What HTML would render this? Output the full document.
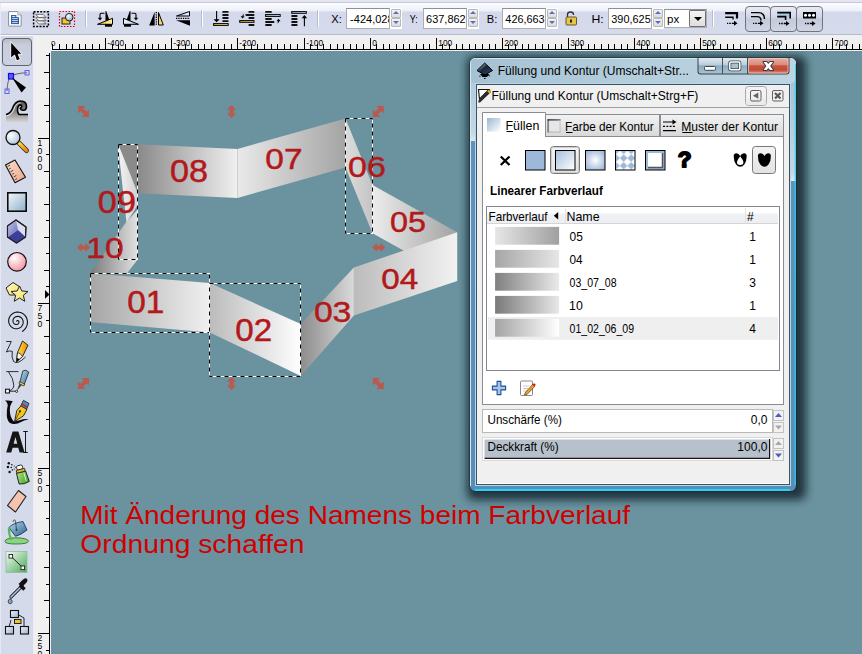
<!DOCTYPE html><html><head><meta charset="utf-8"><style>*{margin:0;padding:0;box-sizing:border-box}
html,body{width:862px;height:654px;overflow:hidden;background:#6a939f;font-family:"Liberation Sans",sans-serif;font-size:12px;color:#000}
.a{position:absolute}
#topstrip{left:0;top:0;width:862px;height:3px;background:#e3e6f1;border-bottom:1px solid #c3c9da}
#tb{left:0;top:3px;width:862px;height:32px;background:linear-gradient(#fcfdfe 0,#eceff8 8px,#d3d8eb 9px,#d6dbec 30px);border-bottom:1px solid #b5bccf;border-left:1px solid #e8ebf5}
#lt{left:0;top:35px;width:34px;height:619px;background:#d5daeb;border-top:1px solid #fbfcfe;border-left:1px solid #e6e9f4;border-right:1px solid #e9ecf5}
#rulh{left:34px;top:35px;width:829px;height:16px;background:#f0f0f0}
#rulv{left:34px;top:35px;width:17px;height:619px;background:#f0f0f0}
#dlg{left:470px;top:58px;width:326px;height:434px;border:1px solid #2f4a5a;border-radius:6px;background:linear-gradient(#c0d4e2,#a8c4d8 40px,#8fb3cc)}
#dlgin{left:6px;top:25px;width:313px;height:401px;background:#ededed;border:1px solid #557a94}
.inp{position:absolute;background:#fff;border:1px solid #abadb3;border-top-color:#8c8f96;height:21px;overflow:hidden;font-size:12px;letter-spacing:-0.6px;line-height:19px;padding-left:4px;white-space:nowrap}
.spin{position:absolute;width:12px;height:21px;background:#fff}
.spin i{position:absolute;left:1px;width:10px;height:9px;background:linear-gradient(#f2f2f2,#dcdcdc);border:1px solid #b9b9b9;border-radius:1px}
.spin i.u{top:1px}.spin i.d{top:10px;height:9px}
.spin i:after{content:"";position:absolute;left:0.5px;border-left:3.5px solid transparent;border-right:3.5px solid transparent}
.spin i.u:after{top:1px;border-bottom:3px solid #5a6cc8}
.spin i.d:after{top:2px;border-top:3px solid #5a6cc8}
.lbl{position:absolute;font-size:12px;line-height:14px;white-space:nowrap}
.sep{position:absolute;width:2px;height:17px;border-left:1px solid #b7bdcc;border-right:1px solid #fff}
.tbtn{position:absolute;border:1px solid #6f7480;border-radius:4px;background:linear-gradient(#e9ecf3,#cfd5e3 45%,#c3cadb 50%,#cfd5e3)}
</style></head><body>
<svg class="a" style="left:0;top:0" width="862" height="654" viewBox="0 0 862 654">
<defs>
<linearGradient id="g08" x1="0" y1="0" x2="1" y2="0"><stop offset="0" stop-color="#8a8a8a"/><stop offset="1" stop-color="#f0f0f0"/></linearGradient>
<linearGradient id="g07" x1="0" y1="0" x2="1" y2="0"><stop offset="0" stop-color="#e9e9e9"/><stop offset="1" stop-color="#a4a4a4"/></linearGradient>
<linearGradient id="g06" x1="0" y1="0" x2="1" y2="0"><stop offset="0" stop-color="#dcdcdc"/><stop offset="1" stop-color="#c4c4c4"/></linearGradient>
<linearGradient id="g05" x1="0" y1="0" x2="1" y2="0"><stop offset="0" stop-color="#ececec"/><stop offset="1" stop-color="#a3a3a3"/></linearGradient>
<linearGradient id="g04" x1="0" y1="0" x2="1" y2="0"><stop offset="0" stop-color="#bcbcbc"/><stop offset="1" stop-color="#f2f2f2"/></linearGradient>
<linearGradient id="g03" x1="0" y1="0" x2="1" y2="0"><stop offset="0" stop-color="#8c8c8c"/><stop offset="1" stop-color="#dadada"/></linearGradient>
<linearGradient id="g02" x1="0" y1="0" x2="1" y2="0"><stop offset="0" stop-color="#bbbbbb"/><stop offset="1" stop-color="#ffffff"/></linearGradient>
<linearGradient id="g01" x1="0" y1="0" x2="1" y2="0"><stop offset="0" stop-color="#a6a6a6"/><stop offset="1" stop-color="#f0f0f0"/></linearGradient>
<linearGradient id="g10" x1="0" y1="0" x2="1" y2="0"><stop offset="0" stop-color="#7a7a7a"/><stop offset="1" stop-color="#e2e2e2"/></linearGradient>
<linearGradient id="g09" x1="0" y1="0" x2="1" y2="0"><stop offset="0" stop-color="#f4f4f4"/><stop offset="1" stop-color="#d0d0d0"/></linearGradient>
<filter id="blur" x="-20%" y="-20%" width="140%" height="140%"><feGaussianBlur stdDeviation="4.5"/></filter>
</defs>
<polygon points="137.8,144.2 237.5,149 237.5,198 137.8,193.2" fill="url(#g08)" />
<polygon points="237.5,149 345.5,118.4 345.5,167.5 237.5,198" fill="url(#g07)" />
<line x1="237.5" y1="149" x2="237.5" y2="198" stroke="#c8d0d2" stroke-width="0.8"/>
<polygon points="345.5,118.4 372.5,185.1 372.5,233.3 345.5,167.5" fill="url(#g06)" />
<polygon points="372.5,185.1 457.2,232.2 457.2,280.4 372.5,233.3" fill="url(#g05)" />
<polygon points="353.9,267.6 457.2,232.2 457.2,281 353.9,315.4" fill="url(#g04)" />
<polygon points="300.8,324.1 353.9,267.6 353.9,315.4 300.8,375.9" fill="url(#g03)" />
<polygon points="209.8,282.9 300.8,324.1 300.8,375.9 209.8,332.4" fill="url(#g02)" />
<polygon points="90,273.2 209.8,282.9 209.8,332.4 90,321.9" fill="url(#g01)" />
<polygon points="90,273.2 127.1,273.2 137.8,259.2 137.8,209.5 125.9,222.5" fill="url(#g10)" />
<polygon points="118.3,144.2 137.8,144.2 137.8,193.2" fill="#8a8a8a" />
<polygon points="118.3,144.2 137.8,193.2 137.8,205 126.5,222.5 118.3,148" fill="url(#g09)" />
<rect x="118.5" y="144.5" width="19.0" height="115.0" fill="none" stroke="#fff" stroke-width="1"/>
<rect x="118.5" y="144.5" width="19.0" height="115.0" fill="none" stroke="#000" stroke-width="1" stroke-dasharray="4 4"/>
<rect x="345.5" y="118.5" width="27.0" height="115.0" fill="none" stroke="#fff" stroke-width="1"/>
<rect x="345.5" y="118.5" width="27.0" height="115.0" fill="none" stroke="#000" stroke-width="1" stroke-dasharray="4 4"/>
<rect x="90.5" y="273.5" width="119.0" height="59.0" fill="none" stroke="#fff" stroke-width="1"/>
<rect x="90.5" y="273.5" width="119.0" height="59.0" fill="none" stroke="#000" stroke-width="1" stroke-dasharray="4 4"/>
<rect x="209.5" y="283.5" width="91.0" height="93.0" fill="none" stroke="#fff" stroke-width="1"/>
<rect x="209.5" y="283.5" width="91.0" height="93.0" fill="none" stroke="#000" stroke-width="1" stroke-dasharray="4 4"/>
<text transform="translate(170.06,181.70) scale(1.1787,1.0617)" font-family="Liberation Sans" font-weight="normal" font-size="29" fill="#b3181b" stroke="#b3181b" stroke-width="0.45">08</text>
<text transform="translate(265.29,168.92) scale(1.1529,0.9984)" font-family="Liberation Sans" font-weight="normal" font-size="29" fill="#b3181b" stroke="#b3181b" stroke-width="0.45">07</text>
<text transform="translate(348.07,177.31) scale(1.1759,1.0130)" font-family="Liberation Sans" font-weight="normal" font-size="29" fill="#b3181b" stroke="#b3181b" stroke-width="0.45">06</text>
<text transform="translate(389.93,232.21) scale(1.1168,1.0179)" font-family="Liberation Sans" font-weight="normal" font-size="29" fill="#b3181b" stroke="#b3181b" stroke-width="0.45">05</text>
<text transform="translate(381.20,289.11) scale(1.1462,1.0130)" font-family="Liberation Sans" font-weight="normal" font-size="29" fill="#b3181b" stroke="#b3181b" stroke-width="0.45">04</text>
<text transform="translate(313.88,321.81) scale(1.1625,1.0179)" font-family="Liberation Sans" font-weight="normal" font-size="29" fill="#b3181b" stroke="#b3181b" stroke-width="0.45">03</text>
<text transform="translate(127.20,313.20) scale(1.1512,1.0569)" font-family="Liberation Sans" font-weight="normal" font-size="29" fill="#b3181b" stroke="#b3181b" stroke-width="0.45">01</text>
<text transform="translate(235.21,341.10) scale(1.1427,1.0617)" font-family="Liberation Sans" font-weight="normal" font-size="29" fill="#b3181b" stroke="#b3181b" stroke-width="0.45">02</text>
<text transform="translate(86.35,258.41) scale(1.1551,1.0179)" font-family="Liberation Sans" font-weight="normal" font-size="29" fill="#b3181b" stroke="#b3181b" stroke-width="0.45">10</text>
<text transform="translate(97.86,212.70) scale(1.1798,1.0617)" font-family="Liberation Sans" font-weight="normal" font-size="29" fill="#b3181b" stroke="#b3181b" stroke-width="0.45">09</text>
<path transform="translate(83.5,111.4)" d="M-5.5,-5.5 L2,-5.5 L-0.3,-3.2 L3.2,0.3 L5.5,-2 L5.5,5.5 L-2,5.5 L0.3,3.2 L-3.2,-0.3 L-5.5,2 Z" fill="#b95a4f"/>
<path transform="translate(378.3,111.4) scale(-1,1)" d="M-5.5,-5.5 L2,-5.5 L-0.3,-3.2 L3.2,0.3 L5.5,-2 L5.5,5.5 L-2,5.5 L0.3,3.2 L-3.2,-0.3 L-5.5,2 Z" fill="#b95a4f"/>
<path transform="translate(83.5,383.5) scale(-1,1)" d="M-5.5,-5.5 L2,-5.5 L-0.3,-3.2 L3.2,0.3 L5.5,-2 L5.5,5.5 L-2,5.5 L0.3,3.2 L-3.2,-0.3 L-5.5,2 Z" fill="#b95a4f"/>
<path transform="translate(378.3,383.5)" d="M-5.5,-5.5 L2,-5.5 L-0.3,-3.2 L3.2,0.3 L5.5,-2 L5.5,5.5 L-2,5.5 L0.3,3.2 L-3.2,-0.3 L-5.5,2 Z" fill="#b95a4f"/>
<path transform="translate(231.5,111.5)" d="M0,-6.5 L4.6,-1.8 L2,-1.8 L2,1.8 L4.6,1.8 L0,6.5 L-4.6,1.8 L-2,1.8 L-2,-1.8 L-4.6,-1.8 Z" fill="#b95a4f"/>
<path transform="translate(231.5,383.5)" d="M0,-6.5 L4.6,-1.8 L2,-1.8 L2,1.8 L4.6,1.8 L0,6.5 L-4.6,1.8 L-2,1.8 L-2,-1.8 L-4.6,-1.8 Z" fill="#b95a4f"/>
<path transform="translate(83.5,247.4) rotate(90)" d="M0,-6.5 L4.6,-1.8 L2,-1.8 L2,1.8 L4.6,1.8 L0,6.5 L-4.6,1.8 L-2,1.8 L-2,-1.8 L-4.6,-1.8 Z" fill="#b95a4f"/>
<path transform="translate(378.8,247.4) rotate(90)" d="M0,-6.5 L4.6,-1.8 L2,-1.8 L2,1.8 L4.6,1.8 L0,6.5 L-4.6,1.8 L-2,1.8 L-2,-1.8 L-4.6,-1.8 Z" fill="#b95a4f"/>
<text transform="translate(80.20,523.8) scale(1.0660,1)" font-family="Liberation Sans" font-weight="normal" font-size="26.3" fill="#d00000" >Mit Änderung des Namens beim Farbverlauf</text>
<text transform="translate(80.36,552.8) scale(1.0751,1)" font-family="Liberation Sans" font-weight="normal" font-size="26.3" fill="#d00000" >Ordnung schaffen</text>
<rect x="467" y="56" width="339" height="444" rx="7" fill="#0a1f28" opacity="0.8" filter="url(#blur)"/>
</svg>
<div id="rulh" class="a"></div><div id="rulv" class="a"></div><div id="lt" class="a"></div>
<svg class="a" style="left:0;top:0" width="862" height="654" viewBox="0 0 862 654" shape-rendering="crispEdges">
<rect x="52" y="49" width="810" height="1" fill="#000"/>
<rect x="49" y="53" width="1" height="601" fill="#000"/>
<rect x="52" y="44" width="1" height="5" fill="#000"/>
<rect x="59" y="44" width="1" height="5" fill="#000"/>
<rect x="66" y="44" width="1" height="5" fill="#000"/>
<rect x="72" y="44" width="1" height="5" fill="#000"/>
<rect x="79" y="44" width="1" height="5" fill="#000"/>
<rect x="85" y="44" width="1" height="5" fill="#000"/>
<rect x="92" y="44" width="1" height="5" fill="#000"/>
<rect x="99" y="44" width="1" height="5" fill="#000"/>
<rect x="105" y="38" width="1" height="11" fill="#000"/>
<rect x="112" y="44" width="1" height="5" fill="#000"/>
<rect x="118" y="44" width="1" height="5" fill="#000"/>
<rect x="125" y="44" width="1" height="5" fill="#000"/>
<rect x="132" y="44" width="1" height="5" fill="#000"/>
<rect x="138" y="44" width="1" height="5" fill="#000"/>
<rect x="145" y="44" width="1" height="5" fill="#000"/>
<rect x="152" y="44" width="1" height="5" fill="#000"/>
<rect x="158" y="44" width="1" height="5" fill="#000"/>
<rect x="165" y="44" width="1" height="5" fill="#000"/>
<rect x="171" y="38" width="1" height="11" fill="#000"/>
<rect x="178" y="44" width="1" height="5" fill="#000"/>
<rect x="185" y="44" width="1" height="5" fill="#000"/>
<rect x="191" y="44" width="1" height="5" fill="#000"/>
<rect x="198" y="44" width="1" height="5" fill="#000"/>
<rect x="204" y="44" width="1" height="5" fill="#000"/>
<rect x="211" y="44" width="1" height="5" fill="#000"/>
<rect x="218" y="44" width="1" height="5" fill="#000"/>
<rect x="224" y="44" width="1" height="5" fill="#000"/>
<rect x="231" y="44" width="1" height="5" fill="#000"/>
<rect x="237" y="38" width="1" height="11" fill="#000"/>
<rect x="244" y="44" width="1" height="5" fill="#000"/>
<rect x="251" y="44" width="1" height="5" fill="#000"/>
<rect x="257" y="44" width="1" height="5" fill="#000"/>
<rect x="264" y="44" width="1" height="5" fill="#000"/>
<rect x="271" y="44" width="1" height="5" fill="#000"/>
<rect x="277" y="44" width="1" height="5" fill="#000"/>
<rect x="284" y="44" width="1" height="5" fill="#000"/>
<rect x="290" y="44" width="1" height="5" fill="#000"/>
<rect x="297" y="44" width="1" height="5" fill="#000"/>
<rect x="304" y="38" width="1" height="11" fill="#000"/>
<rect x="310" y="44" width="1" height="5" fill="#000"/>
<rect x="317" y="44" width="1" height="5" fill="#000"/>
<rect x="323" y="44" width="1" height="5" fill="#000"/>
<rect x="330" y="44" width="1" height="5" fill="#000"/>
<rect x="337" y="44" width="1" height="5" fill="#000"/>
<rect x="343" y="44" width="1" height="5" fill="#000"/>
<rect x="350" y="44" width="1" height="5" fill="#000"/>
<rect x="356" y="44" width="1" height="5" fill="#000"/>
<rect x="363" y="44" width="1" height="5" fill="#000"/>
<rect x="370" y="38" width="1" height="11" fill="#000"/>
<rect x="376" y="44" width="1" height="5" fill="#000"/>
<rect x="383" y="44" width="1" height="5" fill="#000"/>
<rect x="389" y="44" width="1" height="5" fill="#000"/>
<rect x="396" y="44" width="1" height="5" fill="#000"/>
<rect x="403" y="44" width="1" height="5" fill="#000"/>
<rect x="409" y="44" width="1" height="5" fill="#000"/>
<rect x="416" y="44" width="1" height="5" fill="#000"/>
<rect x="423" y="44" width="1" height="5" fill="#000"/>
<rect x="429" y="44" width="1" height="5" fill="#000"/>
<rect x="436" y="38" width="1" height="11" fill="#000"/>
<rect x="442" y="44" width="1" height="5" fill="#000"/>
<rect x="449" y="44" width="1" height="5" fill="#000"/>
<rect x="456" y="44" width="1" height="5" fill="#000"/>
<rect x="462" y="44" width="1" height="5" fill="#000"/>
<rect x="469" y="44" width="1" height="5" fill="#000"/>
<rect x="475" y="44" width="1" height="5" fill="#000"/>
<rect x="482" y="44" width="1" height="5" fill="#000"/>
<rect x="489" y="44" width="1" height="5" fill="#000"/>
<rect x="495" y="44" width="1" height="5" fill="#000"/>
<rect x="502" y="38" width="1" height="11" fill="#000"/>
<rect x="508" y="44" width="1" height="5" fill="#000"/>
<rect x="515" y="44" width="1" height="5" fill="#000"/>
<rect x="522" y="44" width="1" height="5" fill="#000"/>
<rect x="528" y="44" width="1" height="5" fill="#000"/>
<rect x="535" y="44" width="1" height="5" fill="#000"/>
<rect x="542" y="44" width="1" height="5" fill="#000"/>
<rect x="548" y="44" width="1" height="5" fill="#000"/>
<rect x="555" y="44" width="1" height="5" fill="#000"/>
<rect x="561" y="44" width="1" height="5" fill="#000"/>
<rect x="568" y="38" width="1" height="11" fill="#000"/>
<rect x="575" y="44" width="1" height="5" fill="#000"/>
<rect x="581" y="44" width="1" height="5" fill="#000"/>
<rect x="588" y="44" width="1" height="5" fill="#000"/>
<rect x="594" y="44" width="1" height="5" fill="#000"/>
<rect x="601" y="44" width="1" height="5" fill="#000"/>
<rect x="608" y="44" width="1" height="5" fill="#000"/>
<rect x="614" y="44" width="1" height="5" fill="#000"/>
<rect x="621" y="44" width="1" height="5" fill="#000"/>
<rect x="627" y="44" width="1" height="5" fill="#000"/>
<rect x="634" y="38" width="1" height="11" fill="#000"/>
<rect x="641" y="44" width="1" height="5" fill="#000"/>
<rect x="647" y="44" width="1" height="5" fill="#000"/>
<rect x="654" y="44" width="1" height="5" fill="#000"/>
<rect x="660" y="44" width="1" height="5" fill="#000"/>
<rect x="667" y="44" width="1" height="5" fill="#000"/>
<rect x="674" y="44" width="1" height="5" fill="#000"/>
<rect x="680" y="44" width="1" height="5" fill="#000"/>
<rect x="687" y="44" width="1" height="5" fill="#000"/>
<rect x="694" y="44" width="1" height="5" fill="#000"/>
<rect x="700" y="38" width="1" height="11" fill="#000"/>
<rect x="707" y="44" width="1" height="5" fill="#000"/>
<rect x="713" y="44" width="1" height="5" fill="#000"/>
<rect x="720" y="44" width="1" height="5" fill="#000"/>
<rect x="727" y="44" width="1" height="5" fill="#000"/>
<rect x="733" y="44" width="1" height="5" fill="#000"/>
<rect x="740" y="44" width="1" height="5" fill="#000"/>
<rect x="746" y="44" width="1" height="5" fill="#000"/>
<rect x="753" y="44" width="1" height="5" fill="#000"/>
<rect x="760" y="44" width="1" height="5" fill="#000"/>
<rect x="766" y="38" width="1" height="11" fill="#000"/>
<rect x="773" y="44" width="1" height="5" fill="#000"/>
<rect x="779" y="44" width="1" height="5" fill="#000"/>
<rect x="786" y="44" width="1" height="5" fill="#000"/>
<rect x="793" y="44" width="1" height="5" fill="#000"/>
<rect x="799" y="44" width="1" height="5" fill="#000"/>
<rect x="806" y="44" width="1" height="5" fill="#000"/>
<rect x="813" y="44" width="1" height="5" fill="#000"/>
<rect x="819" y="44" width="1" height="5" fill="#000"/>
<rect x="826" y="44" width="1" height="5" fill="#000"/>
<rect x="832" y="38" width="1" height="11" fill="#000"/>
<rect x="839" y="44" width="1" height="5" fill="#000"/>
<rect x="846" y="44" width="1" height="5" fill="#000"/>
<rect x="852" y="44" width="1" height="5" fill="#000"/>
<rect x="859" y="44" width="1" height="5" fill="#000"/>
<text x="107.3" y="45.7" font-family="Liberation Sans" font-size="8.4" fill="#000" shape-rendering="auto">-400</text>
<text x="173.3" y="45.7" font-family="Liberation Sans" font-size="8.4" fill="#000" shape-rendering="auto">-300</text>
<text x="239.3" y="45.7" font-family="Liberation Sans" font-size="8.4" fill="#000" shape-rendering="auto">-200</text>
<text x="306.3" y="45.7" font-family="Liberation Sans" font-size="8.4" fill="#000" shape-rendering="auto">-100</text>
<text x="372.3" y="45.7" font-family="Liberation Sans" font-size="8.4" fill="#000" shape-rendering="auto">0</text>
<text x="438.3" y="45.7" font-family="Liberation Sans" font-size="8.4" fill="#000" shape-rendering="auto">100</text>
<text x="504.3" y="45.7" font-family="Liberation Sans" font-size="8.4" fill="#000" shape-rendering="auto">200</text>
<text x="570.3" y="45.7" font-family="Liberation Sans" font-size="8.4" fill="#000" shape-rendering="auto">300</text>
<text x="636.3" y="45.7" font-family="Liberation Sans" font-size="8.4" fill="#000" shape-rendering="auto">400</text>
<text x="702.3" y="45.7" font-family="Liberation Sans" font-size="8.4" fill="#000" shape-rendering="auto">500</text>
<text x="768.3" y="45.7" font-family="Liberation Sans" font-size="8.4" fill="#000" shape-rendering="auto">600</text>
<text x="834.3" y="45.7" font-family="Liberation Sans" font-size="8.4" fill="#000" shape-rendering="auto">700</text>
<text x="51" y="45.8" font-family="Liberation Sans" font-size="8" fill="#000">0</text>
<rect x="52" y="44" width="1" height="5" fill="#000"/>
<rect x="46" y="55" width="3" height="1" fill="#000"/>
<rect x="44" y="72" width="5" height="1" fill="#000"/>
<rect x="46" y="88" width="3" height="1" fill="#000"/>
<rect x="44" y="105" width="5" height="1" fill="#000"/>
<rect x="46" y="121" width="3" height="1" fill="#000"/>
<rect x="38" y="138" width="11" height="1" fill="#000"/>
<rect x="46" y="154" width="3" height="1" fill="#000"/>
<rect x="44" y="171" width="5" height="1" fill="#000"/>
<rect x="46" y="187" width="3" height="1" fill="#000"/>
<rect x="44" y="204" width="5" height="1" fill="#000"/>
<rect x="46" y="220" width="3" height="1" fill="#000"/>
<rect x="44" y="237" width="5" height="1" fill="#000"/>
<rect x="46" y="253" width="3" height="1" fill="#000"/>
<rect x="44" y="270" width="5" height="1" fill="#000"/>
<rect x="46" y="286" width="3" height="1" fill="#000"/>
<rect x="38" y="303" width="11" height="1" fill="#000"/>
<rect x="46" y="320" width="3" height="1" fill="#000"/>
<rect x="44" y="336" width="5" height="1" fill="#000"/>
<rect x="46" y="353" width="3" height="1" fill="#000"/>
<rect x="44" y="369" width="5" height="1" fill="#000"/>
<rect x="46" y="386" width="3" height="1" fill="#000"/>
<rect x="44" y="402" width="5" height="1" fill="#000"/>
<rect x="46" y="419" width="3" height="1" fill="#000"/>
<rect x="44" y="435" width="5" height="1" fill="#000"/>
<rect x="46" y="452" width="3" height="1" fill="#000"/>
<rect x="38" y="468" width="11" height="1" fill="#000"/>
<rect x="46" y="485" width="3" height="1" fill="#000"/>
<rect x="44" y="501" width="5" height="1" fill="#000"/>
<rect x="46" y="518" width="3" height="1" fill="#000"/>
<rect x="44" y="534" width="5" height="1" fill="#000"/>
<rect x="46" y="551" width="3" height="1" fill="#000"/>
<rect x="44" y="567" width="5" height="1" fill="#000"/>
<rect x="46" y="584" width="3" height="1" fill="#000"/>
<rect x="44" y="600" width="5" height="1" fill="#000"/>
<rect x="46" y="617" width="3" height="1" fill="#000"/>
<rect x="38" y="633" width="11" height="1" fill="#000"/>
<rect x="46" y="650" width="3" height="1" fill="#000"/>
<text x="37.6" y="-18.1" font-family="Liberation Sans" font-size="8.6" fill="#000">1</text>
<text x="37.6" y="-10.1" font-family="Liberation Sans" font-size="8.6" fill="#000">2</text>
<text x="37.6" y="-2.1" font-family="Liberation Sans" font-size="8.6" fill="#000">5</text>
<text x="37.6" y="5.9" font-family="Liberation Sans" font-size="8.6" fill="#000">0</text>
<text x="37.6" y="145.9" font-family="Liberation Sans" font-size="8.6" fill="#000">1</text>
<text x="37.6" y="153.9" font-family="Liberation Sans" font-size="8.6" fill="#000">0</text>
<text x="37.6" y="161.9" font-family="Liberation Sans" font-size="8.6" fill="#000">0</text>
<text x="37.6" y="169.9" font-family="Liberation Sans" font-size="8.6" fill="#000">0</text>
<text x="37.6" y="310.9" font-family="Liberation Sans" font-size="8.6" fill="#000">7</text>
<text x="37.6" y="318.9" font-family="Liberation Sans" font-size="8.6" fill="#000">5</text>
<text x="37.6" y="326.9" font-family="Liberation Sans" font-size="8.6" fill="#000">0</text>
<text x="37.6" y="475.9" font-family="Liberation Sans" font-size="8.6" fill="#000">5</text>
<text x="37.6" y="483.9" font-family="Liberation Sans" font-size="8.6" fill="#000">0</text>
<text x="37.6" y="491.9" font-family="Liberation Sans" font-size="8.6" fill="#000">0</text>
<text x="37.6" y="640.9" font-family="Liberation Sans" font-size="8.6" fill="#000">2</text>
<text x="37.6" y="648.9" font-family="Liberation Sans" font-size="8.6" fill="#000">5</text>
<text x="37.6" y="656.9" font-family="Liberation Sans" font-size="8.6" fill="#000">0</text>
<path d="M45,290 L49.5,294.4 L45,298.8 Z" fill="#000" shape-rendering="auto"/>
</svg>
<div id="topstrip" class="a"></div><div id="tb" class="a"></div>
<div class="inp" style="left:346px;top:8px;width:44px"></div>
<div class="spin" style="left:390px;top:8px"><i class="u"></i><i class="d"></i></div>
<div class="inp" style="left:423px;top:8px;width:44px"></div>
<div class="spin" style="left:467px;top:8px"><i class="u"></i><i class="d"></i></div>
<div class="inp" style="left:502px;top:8px;width:44px"></div>
<div class="spin" style="left:546px;top:8px"><i class="u"></i><i class="d"></i></div>
<div class="inp" style="left:608px;top:8px;width:44px"></div>
<div class="spin" style="left:652px;top:8px"><i class="u"></i><i class="d"></i></div>
<div class="inp" style="left:664px;top:9px;width:43px;height:19px;line-height:17px;padding-left:4px"></div>
<div class="a" style="left:689px;top:10px;width:17px;height:17px;background:linear-gradient(#f3f3f3,#dedede);border:1px solid #707070;border-radius:1px"><div class="a" style="left:4px;top:6px;border-left:4px solid transparent;border-right:4px solid transparent;border-top:4px solid #000"></div></div>
<div class="sep" style="left:85px;top:10px"></div>
<div class="sep" style="left:201px;top:10px"></div>
<div class="sep" style="left:317px;top:10px"></div>
<div class="sep" style="left:712px;top:10px"></div>
<div class="tbtn" style="left:745px;top:6px;width:26px;height:26px"></div>
<div class="tbtn" style="left:770px;top:6px;width:27px;height:26px"></div>
<div class="tbtn" style="left:796px;top:6px;width:27px;height:26px"></div>
<svg class="a" style="left:0;top:0" width="862" height="35" viewBox="0 0 862 35">
<defs>
<linearGradient id="yel" x1="0" y1="0" x2="1" y2="0"><stop offset="0" stop-color="#f2c21a"/><stop offset="1" stop-color="#fff0a8"/></linearGradient>
<linearGradient id="yel2" x1="0" y1="0" x2="1" y2="1"><stop offset="0" stop-color="#f0c020"/><stop offset="1" stop-color="#fde79a"/></linearGradient>
<linearGradient id="lblu" x1="0" y1="0" x2="1" y2="0"><stop offset="0" stop-color="#a9c4d6"/><stop offset="1" stop-color="#eef6fb"/></linearGradient>
<radialGradient id="lens" cx="0.4" cy="0.35" r="0.7"><stop offset="0" stop-color="#ffffff"/><stop offset="1" stop-color="#8aa4bc"/></radialGradient>
<linearGradient id="lay" x1="0" y1="0" x2="1" y2="1"><stop offset="0" stop-color="#ffffff"/><stop offset="0.6" stop-color="#f0f0f0"/><stop offset="1" stop-color="#9a9a9a"/></linearGradient>
</defs>
<path d="M8.6,11.6 H17.8 L21.2,15 V25.6 Q21.2,26.1 20.7,26.1 H9.1 Q8.6,26.1 8.6,25.6 Z" fill="#fff" stroke="#8f8f8f" stroke-width="1"/>
<path d="M17.8,11.6 V15 H21.2" fill="#e6e6e6" stroke="#9a9a9a" stroke-width="0.8"/>
<rect x="11.6" y="15.6" width="4.2" height="2.2" fill="#fff" stroke="#2d62b0" stroke-width="1.2"/>
<rect x="11.6" y="17.7" width="6.8" height="5.8" fill="#fff" stroke="#2d62b0" stroke-width="1.2"/>
<path d="M11.6,19.65 H18.4 M11.6,21.6 H18.4" stroke="#2d62b0" stroke-width="1.1"/>
<rect x="33.6" y="11.8" width="14.8" height="14.6" fill="none" stroke="#000" stroke-width="1.5" stroke-dasharray="2 1.3"/>
<path d="M35.8,20.8 L43.2,20.8 L46.2,24.0 L38.8,24.0 Z" fill="url(#lay)" stroke="#5a5a5a" stroke-width="0.8" stroke-linejoin="round"/>
<path d="M35.8,17.6 L43.2,17.6 L46.2,20.8 L38.8,20.8 Z" fill="url(#lay)" stroke="#5a5a5a" stroke-width="0.8" stroke-linejoin="round"/>
<path d="M35.8,14.4 L43.2,14.4 L46.2,17.6 L38.8,17.6 Z" fill="url(#lay)" stroke="#5a5a5a" stroke-width="0.8" stroke-linejoin="round"/>
<rect x="59.5" y="11.5" width="15" height="15" fill="none" stroke="#e00000" stroke-width="1.2" stroke-dasharray="1.6 1.4"/>
<rect x="62" y="18" width="8" height="6" fill="#f5c928" stroke="#222" stroke-width="1"/>
<circle cx="69.2" cy="17.2" r="3.8" fill="url(#lens)" stroke="#222" stroke-width="1"/>
<g transform="translate(97,0)">
<path d="M8.5,11 L9.2,11 L12.5,20.3 L8.5,21 Z" fill="#000"/>
<path d="M0.5,24.3 L15.5,18.3 L15.5,24.3 Z" fill="url(#yel)" stroke="#000" stroke-width="1"/>
<rect x="8" y="24.2" width="7" height="2.5" fill="#000"/>
<path d="M7.5,13.2 H4.2 Q3,13.2 3,14.5 V18" fill="none" stroke="#000" stroke-width="1.1"/>
<path d="M0.8,17.8 H5.2 L3,20.6 Z" fill="#000"/>
</g>
<g transform="translate(139,0) scale(-1,1)">
<path d="M8.5,11 L9.2,11 L12.5,20.3 L8.5,21 Z" fill="#000"/>
<path d="M0.5,24.3 L15.5,18.3 L15.5,24.3 Z" fill="url(#lblu)" stroke="#000" stroke-width="1"/>
<rect x="8" y="24.2" width="7" height="2.5" fill="#000"/>
<path d="M7.5,13.2 H4.2 Q3,13.2 3,14.5 V18" fill="none" stroke="#000" stroke-width="1.1"/>
<path d="M0.8,17.8 H5.2 L3,20.6 Z" fill="#000"/>
</g>
<path d="M149.2,25.5 L154.6,12 V25.5 Z" fill="#000"/>
<path d="M156.3,12 V25.5" stroke="#000" stroke-width="1.3" stroke-dasharray="1.3 1"/>
<path d="M158.5,12.5 V25 H163.3 Z" fill="url(#yel2)" stroke="#000" stroke-width="1"/>
<path d="M176.5,16 L189.5,11.5 V16 Z" fill="url(#lblu)" stroke="#000" stroke-width="1"/>
<path d="M176,18.3 H190" stroke="#000" stroke-width="1.3" stroke-dasharray="1.3 1"/>
<path d="M176,20.3 H190 V25.8 Z" fill="#000"/>
<path d="M216.6,11 V20.5" stroke="#000" stroke-width="1.1"/><path d="M213.5,19.2 H219.7 L216.6,22.3 Z" fill="#000"/>
<rect x="222.2" y="11.0" width="6.5" height="1.8" rx="0.9" fill="#111"/>
<rect x="222.2" y="14.1" width="6.5" height="1.8" rx="0.9" fill="#111"/>
<rect x="222.2" y="17.1" width="6.5" height="1.8" rx="0.9" fill="#111"/>
<rect x="222.2" y="20.200000000000003" width="6.5" height="1.8" rx="0.9" fill="#111"/>
<rect x="213.6" y="23.6" width="14.599999999999994" height="1.7999999999999972" fill="url(#yel)" stroke="#000" stroke-width="1"/>
<rect x="248.4" y="11.0" width="6.099999999999994" height="1.8" rx="0.9" fill="#111"/>
<rect x="245.4" y="14.1" width="9.099999999999994" height="1.8" rx="0.9" fill="#111"/>
<rect x="248.4" y="17.1" width="6.099999999999994" height="1.8" rx="0.9" fill="#111"/>
<rect x="248.4" y="24.1" width="6.099999999999994" height="1.8" rx="0.9" fill="#111"/>
<rect x="239.7" y="20.6" width="14.300000000000011" height="1.6999999999999993" fill="url(#yel)" stroke="#000" stroke-width="1"/>
<path d="M244,14.6 Q242.6,15 242.6,16.5" fill="none" stroke="#000" stroke-width="1"/><path d="M240.6,16.3 H244.6 L242.6,18.5 Z" fill="#000"/>
<rect x="265.1" y="11.0" width="6.7999999999999545" height="1.8" rx="0.9" fill="#111"/>
<rect x="265.1" y="18.1" width="6.7999999999999545" height="1.8" rx="0.9" fill="#111"/>
<rect x="265.1" y="21.1" width="9.399999999999977" height="1.8" rx="0.9" fill="#111"/>
<rect x="265.1" y="24.1" width="6.7999999999999545" height="1.8" rx="0.9" fill="#111"/>
<rect x="265.6" y="14.6" width="14.599999999999966" height="1.799999999999999" fill="url(#lblu)" stroke="#000" stroke-width="1"/>
<path d="M277.5,23.2 Q278.5,22.8 278.5,21" fill="none" stroke="#000" stroke-width="1"/><path d="M276.5,21.3 H280.5 L278.5,18.8 Z" fill="#000"/>
<rect x="291.7" y="11.6" width="14.600000000000023" height="1.700000000000001" fill="url(#lblu)" stroke="#000" stroke-width="1"/>
<rect x="291.2" y="15.1" width="6.400000000000034" height="1.8" rx="0.9" fill="#111"/>
<rect x="291.2" y="18.1" width="6.400000000000034" height="1.8" rx="0.9" fill="#111"/>
<rect x="291.2" y="21.1" width="6.400000000000034" height="1.8" rx="0.9" fill="#111"/>
<rect x="291.2" y="24.1" width="6.400000000000034" height="1.8" rx="0.9" fill="#111"/>
<path d="M304.4,17 V26.3" stroke="#000" stroke-width="1.1"/><path d="M301.6,18.3 H307.2 L304.4,15 Z" fill="#000"/>
<path d="M567.5,17 V14.5 Q567.5,12 570.5,12 Q573.5,12 573.5,14.5 V15" fill="none" stroke="#333" stroke-width="1.3"/>
<rect x="566" y="17" width="10.5" height="8" rx="1" fill="#e8c547" stroke="#5a4a1a" stroke-width="0.9"/>
<rect x="570" y="19.5" width="2" height="3" fill="#222"/>
<path d="M725.2,13.2 H737 V18.6" fill="none" stroke="#000" stroke-width="2.2"/>
<path d="M725.2,17.3 H733 V19.5" fill="none" stroke="#000" stroke-width="1.4"/>
<path d="M727,23.3 h1.2 M729.2,23.3 h1.6 M731.8,23.3 h3" stroke="#000" stroke-width="1.3"/>
<path d="M734,20.8 L737.5,23.3 L734,25.8 Z" fill="#000"/>
<path d="M751,12.6 H758 Q764.5,12.6 764.5,19" fill="none" stroke="#000" stroke-width="1.4"/>
<path d="M751,16.6 H757 Q761,16.6 761,20.5" fill="none" stroke="#000" stroke-width="1.4"/>
<path d="M753,23.3 h1.2 M755.2,23.3 h1.6 M757.8,23.3 h3" stroke="#000" stroke-width="1.3"/>
<path d="M760,20.8 L763.5,23.3 L760,25.8 Z" fill="#000"/>
<rect x="777.5" y="12.5" width="13" height="5.5" fill="#a9cbe6"/>
<path d="M777.2,12.6 H790.2 V18.6" fill="none" stroke="#000" stroke-width="1.6"/>
<path d="M777.2,16.6 H785.6 V20" fill="none" stroke="#000" stroke-width="1.6"/>
<path d="M779,23.5 h1.2 M781.2,23.5 h1.6 M783.8,23.5 h3" stroke="#000" stroke-width="1.3"/>
<path d="M786,21.0 L789.5,23.5 L786,26.0 Z" fill="#000"/>
<rect x="803" y="12" width="13" height="6.5" fill="#000"/>
<circle cx="805.5" cy="15.2" r="1.5" fill="#fff"/>
<circle cx="809.5" cy="15.2" r="1.5" fill="#fff"/>
<circle cx="813.5" cy="15.2" r="1.5" fill="#fff"/>
<path d="M805,23.5 h1.2 M807.2,23.5 h1.6 M809.8,23.5 h3" stroke="#000" stroke-width="1.3"/>
<path d="M812,21.0 L815.5,23.5 L812,26.0 Z" fill="#000"/>
</svg>
<svg class="a" style="left:0;top:0" width="862" height="35" viewBox="0 0 862 35"><defs><clipPath id="cx"><rect x="347" y="9" width="42" height="19"/></clipPath></defs>
<text transform="translate(331.25,22.7) scale(0.9731,1)" font-family="Liberation Sans" font-weight="normal" font-size="11.5" fill="#000" >X:</text>
<text transform="translate(409.80,22.7) scale(0.7738,1)" font-family="Liberation Sans" font-weight="normal" font-size="11.5" fill="#000" >Y:</text>
<text transform="translate(486.79,22.7) scale(0.9693,1)" font-family="Liberation Sans" font-weight="normal" font-size="11.5" fill="#000" >B:</text>
<text transform="translate(591.50,22.7) scale(1.0624,1)" font-family="Liberation Sans" font-weight="normal" font-size="11.5" fill="#000" >H:</text>
<g clip-path="url(#cx)"><text transform="translate(350.11,22.7) scale(0.9575,1)" font-family="Liberation Sans" font-weight="normal" font-size="11.5" fill="#000" >-424,028</text></g>
<text transform="translate(426.04,22.7) scale(0.9553,1)" font-family="Liberation Sans" font-weight="normal" font-size="11.5" fill="#000" >637,862</text>
<text transform="translate(505.35,22.7) scale(0.9461,1)" font-family="Liberation Sans" font-weight="normal" font-size="11.5" fill="#000" >426,663</text>
<text transform="translate(611.28,22.7) scale(0.9496,1)" font-family="Liberation Sans" font-weight="normal" font-size="11.5" fill="#000" >390,625</text>
<text x="667" y="22.7" font-family="Liberation Sans" font-weight="normal" font-size="11.5" fill="#000" text-anchor="start">px</text>
</svg>
<svg class="a" style="left:0;top:35px" width="34" height="619" viewBox="0 35 34 619">
<defs>
<linearGradient id="selb" x1="0" y1="0" x2="0" y2="1"><stop offset="0" stop-color="#b9bdc7"/><stop offset="0.18" stop-color="#c3c7d2"/><stop offset="0.2" stop-color="#c8cddd"/><stop offset="1" stop-color="#cbd1e1"/></linearGradient>
<linearGradient id="twk" x1="0" y1="0" x2="0" y2="1"><stop offset="0" stop-color="#555"/><stop offset="0.5" stop-color="#8a8a8a"/><stop offset="1" stop-color="#dcdcdc"/></linearGradient>
<radialGradient id="lens2" cx="0.35" cy="0.35" r="0.75"><stop offset="0" stop-color="#ffffff"/><stop offset="1" stop-color="#a8c0d8"/></radialGradient>
<linearGradient id="orng" x1="0" y1="0" x2="1" y2="1"><stop offset="0" stop-color="#ffd34a"/><stop offset="1" stop-color="#e88a00"/></linearGradient>
<linearGradient id="rul" x1="0" y1="0" x2="1" y2="1"><stop offset="0" stop-color="#fbe1d2"/><stop offset="1" stop-color="#eba385"/></linearGradient>
<linearGradient id="rct" x1="0" y1="0" x2="1" y2="1"><stop offset="0" stop-color="#f4f8fb"/><stop offset="1" stop-color="#8eb0cb"/></linearGradient>
<radialGradient id="ell" cx="0.35" cy="0.3" r="0.8"><stop offset="0" stop-color="#ffffff"/><stop offset="1" stop-color="#f58a9a"/></radialGradient>
<linearGradient id="star" x1="0" y1="0" x2="1" y2="1"><stop offset="0" stop-color="#fffbd0"/><stop offset="1" stop-color="#f2df5a"/></linearGradient>
<linearGradient id="pencil" x1="0" y1="0" x2="1" y2="0"><stop offset="0" stop-color="#ffe84a"/><stop offset="1" stop-color="#f08a00"/></linearGradient>
<linearGradient id="penb" x1="0" y1="0" x2="1" y2="1"><stop offset="0" stop-color="#bfe0ef"/><stop offset="1" stop-color="#2f6f9a"/></linearGradient>
<linearGradient id="grn" x1="0" y1="0" x2="1" y2="1"><stop offset="0" stop-color="#a8e68a"/><stop offset="1" stop-color="#3c9a1e"/></linearGradient>
<linearGradient id="bkt" x1="0" y1="0" x2="1" y2="1"><stop offset="0" stop-color="#b4dcef"/><stop offset="1" stop-color="#2b5f8c"/></linearGradient>
<linearGradient id="grd" x1="0" y1="0" x2="1" y2="1"><stop offset="0" stop-color="#f6fbf4"/><stop offset="1" stop-color="#4aa85a"/></linearGradient>
<linearGradient id="cn" x1="0" y1="0" x2="1" y2="1"><stop offset="0" stop-color="#eef4fa"/><stop offset="1" stop-color="#98b4cc"/></linearGradient>
<linearGradient id="box3" x1="0" y1="0" x2="1" y2="1"><stop offset="0" stop-color="#c4c6ec"/><stop offset="1" stop-color="#6a6cb8"/></linearGradient>
</defs>
<rect x="2.5" y="38.5" width="29" height="27" rx="3.5" fill="url(#selb)" stroke="#5f636b" stroke-width="1"/>
<path d="M10.7,41.7 L10.7,58.2 L14.6,55 L16.6,61 L20.3,59.3 L18.2,54.3 L22,54.1 Z" fill="#000" stroke="#fff" stroke-width="0.9" stroke-linejoin="round"/>
<path d="M7,91 Q7.5,79 11,76.5 Q16,73 27,72.8" fill="none" stroke="#555" stroke-width="0.9"/>
<rect x="8.5" y="73.5" width="5" height="5.5" fill="#5a5af8" stroke="#1010e0" stroke-width="1.2"/>
<rect x="25" y="70.5" width="4" height="4.5" fill="none" stroke="#6060f0" stroke-width="1"/>
<rect x="5" y="89" width="4" height="4.5" fill="none" stroke="#6060f0" stroke-width="1"/>
<path d="M12,77.5 L26,87.5 L21.5,92.5 Z" fill="#000"/>
<path d="M6,123 V114.5 Q10.5,113.5 12.5,108.5 Q15,101 20.5,101 Q26.5,101 26.5,106.5 Q26.5,110 23.5,110.3 Q21,110.5 20.2,108.5 Q22.2,107.5 21.6,105.6 Q19.8,103.6 18,107 Q16.6,111.5 19,114.5 H28 V123 Z" fill="url(#twk)"/>
<path d="M6,114.5 Q10.5,113.5 12.5,108.5 Q15,101 20.5,101 Q26.5,101 26.5,106.5 Q26.5,110 23.5,110.3 Q21,110.5 20.2,108.5 Q22.2,107.5 21.6,105.6 Q19.8,103.6 18,107 Q16.6,111.5 19,114.5 H28" fill="none" stroke="#000" stroke-width="1.6"/>
<path d="M6.5,116 Q11.5,115 13.8,109.5 Q16,102.8 20.5,102.8" fill="none" stroke="#fff" stroke-width="0.9"/>
<path d="M19,143 L26.5,150.5" stroke="#333" stroke-width="5" stroke-linecap="round"/>
<path d="M19,143 L26.5,150.5" stroke="url(#orng)" stroke-width="3.2" stroke-linecap="round"/>
<circle cx="13" cy="137.5" r="7" fill="url(#lens2)" stroke="#111" stroke-width="1.3"/>
<path d="M5.5,165 L15,160 L25.5,177.3 L15,182.8 Z" fill="url(#rul)" stroke="#111" stroke-width="1.1" stroke-linejoin="round"/>
<path d="M7.5,166.5 l2.64,-1.41" stroke="#222" stroke-width="0.8"/>
<path d="M9.05,169.1 l1.76,-0.94" stroke="#222" stroke-width="0.8"/>
<path d="M10.6,171.7 l2.64,-1.41" stroke="#222" stroke-width="0.8"/>
<path d="M12.15,174.3 l1.76,-0.94" stroke="#222" stroke-width="0.8"/>
<path d="M13.7,176.9 l2.64,-1.41" stroke="#222" stroke-width="0.8"/>
<path d="M15.25,179.5 l1.76,-0.94" stroke="#222" stroke-width="0.8"/>
<rect x="7.8" y="192.8" width="18.4" height="18.4" fill="url(#rct)" stroke="#000" stroke-width="1.5"/>
<path d="M7.5,226 L16,220 L26,227 L25.5,237 L16.5,243 L7.5,237 Z" fill="#ddddf4" stroke="#111" stroke-width="1.1" stroke-linejoin="round"/>
<path d="M7.5,226 L16,220 L18,230 L8,237 Z" fill="url(#box3)"/>
<path d="M8,237 L18,230 L25.5,237 L16.5,243 Z" fill="#3c3f98"/>
<path d="M7.5,226 L16,220 L26,227 L25.5,237 L16.5,243 L7.5,237 Z" fill="none" stroke="#222" stroke-width="1.1" stroke-linejoin="round"/>
<circle cx="17" cy="261.8" r="9.3" fill="url(#ell)" stroke="#111" stroke-width="1.2"/>
<path d="M6,288 L13,282.5 L20,287 L18,295 L9.5,295 Z" fill="url(#star)" stroke="#222" stroke-width="1"/>
<path d="M19.5,286 L21.8,291 L28,291.5 L23.3,295.3 L24.8,301.3 L19.5,298 L14.2,301.3 L15.7,295.3 L11,291.5 L17.2,291 Z" fill="url(#star)" stroke="#222" stroke-width="1" stroke-linejoin="round"/>
<path d="M17.00,321.50 L16.93,321.46 L16.88,321.40 L16.84,321.32 L16.81,321.24 L16.80,321.15 L16.81,321.06 L16.84,320.96 L16.89,320.87 L16.96,320.78 L17.05,320.70 L17.16,320.63 L17.28,320.58 L17.42,320.55 L17.57,320.54 L17.73,320.55 L17.89,320.58 L18.05,320.64 L18.21,320.72 L18.37,320.83 L18.51,320.97 L18.64,321.13 L18.75,321.32 L18.84,321.52 L18.90,321.75 L18.94,321.99 L18.94,322.24 L18.92,322.50 L18.85,322.76 L18.75,323.02 L18.62,323.27 L18.45,323.51 L18.24,323.74 L18.00,323.94 L17.74,324.12 L17.44,324.27 L17.12,324.38 L16.77,324.45 L16.42,324.48 L16.05,324.47 L15.68,324.41 L15.31,324.31 L14.94,324.15 L14.59,323.95 L14.26,323.71 L13.95,323.42 L13.68,323.08 L13.44,322.71 L13.25,322.30 L13.10,321.87 L13.00,321.41 L12.96,320.93 L12.98,320.45 L13.05,319.96 L13.19,319.47 L13.38,318.99 L13.64,318.54 L13.95,318.11 L14.32,317.71 L14.74,317.35 L15.21,317.05 L15.72,316.79 L16.27,316.59 L16.84,316.46 L17.44,316.40 L18.04,316.41 L18.65,316.49 L19.26,316.64 L19.85,316.87 L20.42,317.17 L20.96,317.54 L21.46,317.98 L21.90,318.48 L22.30,319.04 L22.62,319.65 L22.88,320.30 L23.06,320.98 L23.16,321.69 L23.17,322.42 L23.10,323.15 L22.94,323.88 L22.69,324.60 L22.36,325.28 L21.94,325.94 L21.44,326.54 L20.87,327.09 L20.23,327.57 L19.53,327.98 L18.78,328.31 L17.99,328.55 L17.16,328.70 L16.31,328.75 L15.46,328.70 L14.61,328.54 L13.77,328.29 L12.96,327.94 L12.18,327.48 L11.46,326.94 L10.81,326.31 L10.22,325.59 L9.72,324.81 L9.30,323.96 L8.99,323.06 L8.78,322.13 L8.69,321.16 L8.70,320.19 L8.84,319.21 L9.08,318.24 L9.45,317.30 L9.92,316.41 L10.50,315.56 L11.19,314.79 L11.96,314.09 L12.82,313.48 L13.76,312.98 L14.75,312.58 L15.80,312.30 L16.87,312.14 L17.97,312.11 L19.08,312.21 L20.17,312.44 L21.24,312.80 L22.27,313.28 L23.24,313.89 L24.14,314.61 L24.96,315.44 L25.68,316.37 L26.29,317.38 L26.78,318.47 L27.15,319.61 L27.38,320.80 L27.47,322.02 L27.41,323.25 L27.22,324.47 L26.88,325.67 L26.39,326.83 L25.77,327.93 L25.02,328.97 L24.15,329.91 L23.17,330.75 L22.08,331.48" fill="none" stroke="#111" stroke-width="1.1"/>
<path d="M6.2,341.5 H11.3 L6.4,352 Q9.2,350.3 12.3,351.3 Q11.2,357.5 13.6,361.5 Q17.5,365 25.5,357" fill="none" stroke="#1a1a1a" stroke-width="0.9"/>
<path d="M16.5,361.8 L17.5,352.5 L22.5,341 L28,345.2 L22.5,356.5 Z" fill="url(#pencil)" stroke="#1a1a1a" stroke-width="0.9" stroke-linejoin="round"/>
<path d="M16.5,361.8 L17.5,352.5 Q20.5,352.8 22.5,356.5 Z" fill="#fff8e6" stroke="#1a1a1a" stroke-width="0.8"/>
<path d="M16.5,361.8 L16.9,358 Q18.6,358.3 19.4,359.5 Z" fill="#000"/>
<path d="M6.3,371.6 H18.5 M8.6,372 Q13.5,378.5 13.8,385 Q13.8,389.5 9,391" fill="none" stroke="#1a1a1a" stroke-width="0.9"/>
<path d="M9.5,391.2 H15.5" stroke="#1a1a1a" stroke-width="0.9"/>
<rect x="5.6" y="389.2" width="3.8" height="3.8" fill="#fff" stroke="#000" stroke-width="1"/>
<circle cx="16.6" cy="391.3" r="1.1" fill="#fff" stroke="#000" stroke-width="0.8"/>
<path d="M17.6,389.5 L20.2,382.8 L22.3,384 Z" fill="#444" stroke="#222" stroke-width="0.5"/>
<path d="M19.6,383.2 L22.8,371 Q25.8,368.8 28.8,372.2 L23.8,385.6 Z" fill="url(#penb)" stroke="#1a1a1a" stroke-width="0.8"/>
<path d="M19.4,381.6 L24.8,384.2 L23.8,386 L19,383.6 Z" fill="#f5c842" stroke="#1a1a1a" stroke-width="0.6"/>
<path d="M5,400.6 Q9,400 12.8,401.2 Q9.6,405 9.8,411 Q10.2,418 14,421.5 Q19,420.5 23,419.3 Q26.5,418.5 28.5,419.8 Q25,420 21.5,421.8 Q17,424.5 13,424 Q7.5,423.5 6.8,416 Q6.5,410 7.8,405 Q7.2,402 5,400.6 Z" fill="#0a0a0a"/>
<path d="M14.6,421.6 L16.8,410.5 L21.8,405 L27,409.3 L23.5,415.8 Z" fill="#f5c518" stroke="#1a1a1a" stroke-width="0.9" stroke-linejoin="round"/>
<path d="M14.6,421.6 L19.8,411.6" stroke="#222" stroke-width="0.7"/><circle cx="20" cy="411.3" r="1" fill="#111"/>
<path d="M20.8,405.8 L23.5,400.3 L29,403.5 L26.6,409.3 Z" fill="#4f8bb8" stroke="#1a1a1a" stroke-width="0.8"/>
<path d="M21.8,404.2 L27.4,407.3" stroke="#d01a1a" stroke-width="1.4"/>
<path d="M6.2,452.5 L12.6,431.5 H18.4 L24.6,452.5 H19.6 L18.3,447.8 H12.6 L11.3,452.5 Z M13.6,443.8 H17.3 L15.45,437 Z" fill="#151515" fill-rule="evenodd"/>
<path d="M23.2,431.5 H27.8 M25.5,431.5 V452.5 M23.2,452.5 H27.8" stroke="#000" stroke-width="0.9"/>
<circle cx="8.8" cy="463.2" r="1.2" fill="#111"/>
<circle cx="7.9" cy="467" r="1.2" fill="#111"/>
<circle cx="9.6" cy="472" r="1.2" fill="#111"/>
<circle cx="11.8" cy="464.8" r="0.8" fill="#111"/>
<circle cx="11.2" cy="467.5" r="0.8" fill="#111"/>
<circle cx="12.4" cy="470" r="0.8" fill="#111"/>
<circle cx="14.2" cy="466" r="0.6" fill="#111"/>
<circle cx="14.3" cy="469" r="0.6" fill="#111"/>
<circle cx="15.5" cy="467.3" r="0.5" fill="#111"/>
<g transform="rotate(-14 22 475)">
<path d="M17,472 L26.5,472 L27.5,483 Q22,485 17,483 Z" fill="url(#grn)" stroke="#222" stroke-width="0.9"/>
<path d="M24.5,474 V482" stroke="#d8f5c8" stroke-width="0.9"/>
<rect x="18.5" y="465" width="6" height="4.2" rx="1.5" fill="#fff" stroke="#222" stroke-width="0.9"/>
<rect x="17.5" y="469.2" width="8.5" height="2.8" fill="#f0b828" stroke="#222" stroke-width="0.8"/>
</g>
<path d="M7.5,505.5 L18.5,490.5 L26,496.5 L15.5,512 Z" fill="#f5c4b0" stroke="#222" stroke-width="1.1" stroke-linejoin="round"/>
<path d="M5,541.5 Q5,538 16,537.8 Q28,538 28.5,541.3 Q28,544 16,544 Q5,544 5,541.5 Z" fill="#8ad680" stroke="#226622" stroke-width="0.8"/>
<path d="M9,527.5 Q13,523 23,521.5 L27,530 Q21,535 15.5,536.3 Z" fill="url(#bkt)" stroke="#1a3a5a" stroke-width="0.9"/>
<path d="M9,527.5 Q8.5,534 11.5,540" fill="none" stroke="#5ab85a" stroke-width="2.2"/>
<path d="M13,522 Q14,518 15.5,521 L16.5,530" fill="none" stroke="#333" stroke-width="0.8"/>
<circle cx="16.5" cy="530" r="1" fill="#333"/>
<rect x="6" y="551.5" width="21" height="21" fill="url(#grd)" stroke="#8ac09a" stroke-width="0.8"/>
<path d="M10.8,556.2 L23,567.8" stroke="#222" stroke-width="1"/>
<rect x="9" y="554.5" width="3.6" height="3.6" fill="#fff" stroke="#222" stroke-width="0.9"/>
<rect x="21" y="566" width="3.6" height="3.6" fill="#fff" stroke="#222" stroke-width="0.9"/>
<path d="M11,597 L22,586" stroke="#222" stroke-width="3.2" stroke-linecap="round"/>
<path d="M11,597 L22,586" stroke="#a8c8e8" stroke-width="1.5" stroke-linecap="round"/>
<path d="M20,585 L24.5,589.5" stroke="#111" stroke-width="3.5"/>
<path d="M22,587 L26.5,582.5 Q28.5,579.5 26.5,578.5 Q25,577.5 22.5,580 L18.5,584 Z" fill="#111"/>
<ellipse cx="10.2" cy="601.5" rx="2" ry="2.3" fill="#7aa6d0" stroke="#333" stroke-width="0.8"/>
<path d="M18,614.5 L24,618 V627 M11,620 L9,627" fill="none" stroke="#111" stroke-width="0.9"/>
<rect x="10.5" y="610.5" width="8" height="7" fill="url(#cn)" stroke="#111" stroke-width="1.1"/>
<rect x="14.5" y="619.5" width="6.5" height="4" fill="#f2c422" stroke="#111" stroke-width="0.9"/>
<rect x="5.5" y="626.5" width="8" height="7.5" fill="url(#cn)" stroke="#111" stroke-width="1.1"/>
<rect x="20.5" y="626.5" width="8" height="7.5" fill="url(#cn)" stroke="#111" stroke-width="1.1"/>
</svg>
<svg class="a" style="left:0;top:0" width="862" height="654" viewBox="0 0 862 654">
<defs>
<linearGradient id="frm" gradientUnits="userSpaceOnUse" x1="485" y1="57" x2="430" y2="500">
 <stop offset="0" stop-color="#a9c4d4"/><stop offset="0.17" stop-color="#c3d8e4"/><stop offset="0.19" stop-color="#d8e8f1"/><stop offset="0.191" stop-color="#5b93bb"/><stop offset="1" stop-color="#568eb6"/></linearGradient>
<linearGradient id="ttl" x1="0" y1="0" x2="1" y2="0"><stop offset="0" stop-color="#a3c0d2"/><stop offset="0.5" stop-color="#b6cfdd"/><stop offset="1" stop-color="#c2d8e4"/></linearGradient>
<linearGradient id="cbtn" x1="0" y1="0" x2="0" y2="1"><stop offset="0" stop-color="#dfeaf1"/><stop offset="0.45" stop-color="#b9cddb"/><stop offset="0.5" stop-color="#8eaabd"/><stop offset="1" stop-color="#a9c3d3"/></linearGradient>
<linearGradient id="xbtn" x1="0" y1="0" x2="0" y2="1"><stop offset="0" stop-color="#e8b0a6"/><stop offset="0.42" stop-color="#d98b7d"/><stop offset="0.5" stop-color="#c9553d"/><stop offset="0.75" stop-color="#c24a34"/><stop offset="1" stop-color="#d88d7e"/></linearGradient>
<linearGradient id="itab" x1="0" y1="0" x2="0" y2="1"><stop offset="0" stop-color="#f3f3f3"/><stop offset="1" stop-color="#d8d8d8"/></linearGradient>
<linearGradient id="fillic" x1="0" y1="0" x2="1" y2="1"><stop offset="0" stop-color="#9cb5d3"/><stop offset="1" stop-color="#ffffff"/></linearGradient>
<linearGradient id="flat" x1="0" y1="0" x2="0" y2="1"><stop offset="0" stop-color="#9db8d8"/><stop offset="1" stop-color="#9db8d8"/></linearGradient>
<linearGradient id="lin" x1="0" y1="0" x2="1" y2="1"><stop offset="0" stop-color="#a5bedc"/><stop offset="1" stop-color="#ffffff"/></linearGradient>
<radialGradient id="rad" cx="0.5" cy="0.5" r="0.6"><stop offset="0" stop-color="#ffffff"/><stop offset="1" stop-color="#9db8d8"/></radialGradient>
<linearGradient id="hdr" x1="0" y1="0" x2="0" y2="1"><stop offset="0" stop-color="#ffffff"/><stop offset="0.4" stop-color="#ffffff"/><stop offset="0.41" stop-color="#f1f2f4"/><stop offset="1" stop-color="#eceef1"/></linearGradient>
<linearGradient id="pbtn" x1="0" y1="0" x2="0" y2="1"><stop offset="0" stop-color="#f4f4f4"/><stop offset="1" stop-color="#e2e2e2"/></linearGradient>
<linearGradient id="sw1" x1="0" y1="0" x2="1" y2="0"><stop offset="0" stop-color="#e6e6e6"/><stop offset="1" stop-color="#a0a0a0"/></linearGradient>
<linearGradient id="sw2" x1="0" y1="0" x2="1" y2="0"><stop offset="0" stop-color="#a6a6a6"/><stop offset="1" stop-color="#e6e6e6"/></linearGradient>
<linearGradient id="sw3" x1="0" y1="0" x2="1" y2="0"><stop offset="0" stop-color="#808080"/><stop offset="1" stop-color="#eaeaea"/></linearGradient>
<linearGradient id="sw4" x1="0" y1="0" x2="1" y2="0"><stop offset="0" stop-color="#7a7a7a"/><stop offset="1" stop-color="#e8e8e8"/></linearGradient>
<linearGradient id="sw5" x1="0" y1="0" x2="1" y2="0"><stop offset="0" stop-color="#a4a4a4"/><stop offset="1" stop-color="#ffffff"/></linearGradient>
<pattern id="chk" width="7.6" height="7.6" patternUnits="userSpaceOnUse" x="616" y="150.5"><rect width="7.6" height="7.6" fill="#9db8d8"/><path d="M3.8,0 L7.6,3.8 L3.8,7.6 L0,3.8 Z" fill="#ffffff"/></pattern>
</defs>
<rect x="469.5" y="57.5" width="327" height="434" rx="6" ry="6" fill="#15242c"/>
<rect x="470" y="58" width="326" height="433" rx="5.5" ry="5.5" fill="url(#frm)"/>
<path d="M470.5,486 V63.5 Q470.5,58.5 475.5,58.5 H790.5 Q795.5,58.5 795.5,63.5" fill="none" stroke="#d6e8f2" stroke-width="1"/>
<path d="M475,490 H790" stroke="#2ad0f5" stroke-width="1.8"/>
<path d="M795.2,64 V485" stroke="#2ad0f5" stroke-width="1"/>
<rect x="471" y="59" width="324" height="24" rx="4" fill="url(#ttl)" opacity="0.85"/>
<rect x="475.5" y="83.5" width="315" height="402" fill="none" stroke="#b8d6ea" stroke-width="1"/>
<rect x="476" y="84" width="314" height="401" fill="#3b5464"/>
<rect x="477" y="85" width="312" height="399" fill="#f0f0f0"/>
<path d="M477,483.5 H789" stroke="#ffffff" stroke-width="1"/>
<defs><linearGradient id="ink" x1="0" y1="0" x2="1" y2="1"><stop offset="0" stop-color="#f4f8fb"/><stop offset="0.45" stop-color="#1a2438"/><stop offset="1" stop-color="#2a4a80"/></linearGradient></defs>
<path d="M484.7,63 L492.5,70.5 L484.7,75 L477,70.5 Z" fill="url(#ink)" stroke="#000" stroke-width="1"/>
<path d="M480,74 H489.5 L487,77 H482.5 Z" fill="#000"/>
<path d="M479.3,76.2 h1.2 M488.6,75.8 h1.2 M484,78.4 h1.6" stroke="#000" stroke-width="1"/>
<text transform="translate(497.71,74.6) scale(1.0047,1)" font-family="Liberation Sans" font-weight="normal" font-size="12" fill="#000" >Füllung und Kontur (Umschalt+Str...</text>
<path d="M697.5,58 V71.5 Q697.5,74.5 700.5,74.5 H786.5 Q789.5,74.5 789.5,71.5 V58" fill="#35434d"/>
<path d="M698.5,58 V71 Q698.5,73.5 701,73.5 H722 V58 Z" fill="url(#cbtn)"/>
<rect x="723" y="58" width="24" height="15.5" fill="url(#cbtn)"/>
<path d="M748,58 V73.5 H786 Q788.5,73.5 788.5,71 V58 Z" fill="url(#xbtn)"/>
<path d="M722.5,58 V74 M747.5,58 V74" stroke="#40505c" stroke-width="1"/>
<rect x="704.5" y="66.5" width="11" height="3.8" rx="1" fill="#fff" stroke="#3c4852" stroke-width="1"/>
<rect x="729.8" y="62" width="10" height="7.8" rx="1" fill="#a8c2d2" stroke="#3c4852" stroke-width="3"/>
<rect x="729.8" y="62" width="10" height="7.8" rx="1" fill="none" stroke="#fff" stroke-width="1.5"/>
<rect x="748.5" y="58.5" width="39.5" height="14.5" rx="1.5" fill="none" stroke="#f0c8c0" stroke-width="1" opacity="0.8"/>
<path transform="translate(768.3,66)" d="M-4.8,-4 L-1.6,-4 L0,-2 L1.6,-4 L4.8,-4 L1.9,0 L4.8,4 L1.6,4 L0,2 L-1.6,4 L-4.8,4 L-1.9,0 Z" fill="#fff" stroke="#34384a" stroke-width="2" stroke-linejoin="round" paint-order="stroke"/>
<path d="M478.5,89.5 H489 L479.5,99 Z" fill="#fff" stroke="#111" stroke-width="1.1"/>
<path d="M489.5,89 L491,92 L480,102.5 L478.3,102.6 L478.6,100.5 Z" fill="#2a2a2a"/>
<path d="M488.6,89.8 L491,91.8 L489.5,93.4 L487.2,91.2 Z" fill="#f2b400"/>
<text transform="translate(491.51,99.6) scale(1.0041,1)" font-family="Liberation Sans" font-weight="normal" font-size="12" fill="#000" >Füllung und Kontur (Umschalt+Strg+F)</text>
<rect x="745.5" y="86.5" width="21" height="19" rx="3" fill="#f3f3f3" stroke="#a8a8a8" stroke-width="1"/>
<rect x="746" y="98.5" width="20" height="6.5" rx="2" fill="#ebebeb"/>
<rect x="750.5" y="90.5" width="10.5" height="10.5" rx="1.5" fill="none" stroke="#606060" stroke-width="1"/>
<path d="M758.3,92.6 V98.8 L752.8,95.7 Z" fill="#666"/>
<rect x="772.5" y="90.5" width="10.5" height="10.5" rx="1.5" fill="#f0f0f0" stroke="#606060" stroke-width="1"/>
<path d="M775,93 L780.5,98.5 M780.5,93 L775,98.5" stroke="#5a5a5a" stroke-width="2.2"/>
<path d="M477,107.5 H789" stroke="#a0a0a0" stroke-width="1"/>
<rect x="482.5" y="136.5" width="301" height="268" fill="#fff" stroke="#898c95" stroke-width="1"/>
<rect x="545.5" y="114.5" width="114" height="22" fill="url(#itab)" stroke="#898c95" stroke-width="1"/>
<rect x="660.5" y="114.5" width="123" height="22" fill="url(#itab)" stroke="#898c95" stroke-width="1"/>
<path d="M482.5,137 V112.5 H545.5 V137" fill="#fff" stroke="#898c95" stroke-width="1"/>
<rect x="483" y="136" width="62" height="2" fill="#fff"/>
<rect x="487" y="118" width="13.5" height="13.6" fill="url(#fillic)"/>
<text transform="translate(505.48,130.0) scale(1.0349,1)" font-family="Liberation Sans" font-weight="normal" font-size="12" fill="#000" >Füllen</text>
<path d="M506.5,131.5 H513" stroke="#000" stroke-width="1"/>
<defs><linearGradient id="skl" x1="0" y1="0" x2="1" y2="0"><stop offset="0" stop-color="#222"/><stop offset="1" stop-color="#9a9a9a" stop-opacity="0.5"/></linearGradient><linearGradient id="skt" x1="0" y1="0" x2="1" y2="0"><stop offset="0" stop-color="#111"/><stop offset="1" stop-color="#555"/></linearGradient></defs>
<rect x="548" y="119.5" width="12.5" height="13" fill="#e6e6e6"/>
<rect x="547.6" y="119.3" width="1.6" height="13.3" fill="url(#skl)"/>
<rect x="547.6" y="119.3" width="13" height="1.2" fill="url(#skt)"/>
<rect x="559.6" y="120" width="0.9" height="12" fill="#bbb"/>
<rect x="548.5" y="131.6" width="12" height="0.9" fill="#999" opacity="0.7"/>
<text transform="translate(565.04,130.7) scale(0.9795,1)" font-family="Liberation Sans" font-weight="normal" font-size="12" fill="#000" >Farbe der Kontur</text>
<path d="M566,132.5 H572.5" stroke="#000" stroke-width="1"/>
<path d="M663,122 H673 M663,126.3 h2 M666.3,126.3 h2 M669.6,126.3 h2 M672.9,126.3 h2 M663,130.6 H676" stroke="#000" stroke-width="1.2"/>
<path d="M672.5,119.5 L676.5,122 L672.5,124.5 Z" fill="#000"/>
<text transform="translate(681.31,130.7) scale(1.0078,1)" font-family="Liberation Sans" font-weight="normal" font-size="12" fill="#000" >Muster der Kontur</text>
<path d="M682.3,132.5 H692.5" stroke="#000" stroke-width="1"/>
<path d="M500.8,156.5 L509.5,165 M509.5,156.5 L500.8,165" stroke="#000" stroke-width="2.3"/>
<rect x="525.5" y="150.5" width="19.5" height="19.5" fill="#9db8d8" stroke="#000" stroke-width="1"/>
<rect x="550.5" y="146.5" width="29" height="27" rx="3" fill="url(#pbtn)" stroke="#777" stroke-width="1"/>
<rect x="551.5" y="147.5" width="27" height="25" rx="2" fill="none" stroke="#cfcfcf" stroke-width="1"/>
<rect x="555.5" y="150.5" width="19.5" height="19.5" fill="url(#lin)" stroke="#000" stroke-width="1"/>
<rect x="585.5" y="150.5" width="19.5" height="19.5" fill="url(#rad)" stroke="#000" stroke-width="1"/>
<rect x="615.5" y="150.5" width="19.5" height="19.5" fill="url(#chk)" stroke="#000" stroke-width="1"/>
<rect x="645.5" y="150.5" width="19.5" height="19.5" fill="#9db8d8" stroke="#000" stroke-width="1"/>
<rect x="648" y="153" width="14.5" height="14.5" fill="#fff"/>
<path d="M648,167.5 H662.5 V153" fill="none" stroke="#555" stroke-width="1.5"/>
<text transform="translate(677.77,166.80) scale(1.1323,1.1308)" font-family="Liberation Sans" font-weight="bold" font-size="20" fill="#000" stroke="#000" stroke-width="1.6" stroke-linejoin="round">?</text>
<path transform="translate(733.2,152.9)" d="M0.5,3.2 Q0.5,0.3 3.2,0.3 Q5.6,0.3 7,3.2 Q8.4,0.3 10.8,0.3 Q13.5,0.3 13.5,3.2 Q13.5,8.5 11.3,11.3 Q9.4,13.8 7,13.8 Q4.6,13.8 2.7,11.3 Q0.5,8.5 0.5,3.2 Z M7,3.4 Q10.2,7.4 10.2,9.5 Q10.2,12 7,12 Q3.8,12 3.8,9.5 Q3.8,7.4 7,3.4 Z" fill="#000" fill-rule="evenodd"/>
<rect x="752.5" y="146.5" width="23" height="27" rx="3" fill="url(#pbtn)" stroke="#777" stroke-width="1"/>
<path transform="translate(757.4,152.9)" d="M0.5,3.2 Q0.5,0.3 3.2,0.3 Q5.6,0.3 7,3.2 Q8.4,0.3 10.8,0.3 Q13.5,0.3 13.5,3.2 Q13.5,8.5 11.3,11.3 Q9.4,13.8 7,13.8 Q4.6,13.8 2.7,11.3 Q0.5,8.5 0.5,3.2 Z" fill="#000"/>
<text transform="translate(490.02,194.7) scale(0.9734,1)" font-family="Liberation Sans" font-weight="bold" font-size="12" fill="#000" >Linearer Farbverlauf</text>
<rect x="486.5" y="206.5" width="293" height="164" fill="#fff" stroke="#828790" stroke-width="1"/>
<rect x="487" y="207" width="291" height="16" fill="url(#hdr)"/>
<path d="M487,223.5 H778" stroke="#d5d5d5" stroke-width="1"/>
<path d="M565.5,208 V223 M745.5,208 V223" stroke="#e2e3ea" stroke-width="1"/>
<text transform="translate(488.54,221.2) scale(0.9728,1)" font-family="Liberation Sans" font-weight="normal" font-size="12" fill="#000" >Farbverlauf</text>
<path d="M558.2,212 V219.5 L553.8,215.75 Z" fill="#000"/>
<text transform="translate(566.48,221.2) scale(1.0331,1)" font-family="Liberation Sans" font-weight="normal" font-size="12" fill="#000" >Name</text>
<text x="747" y="221.2" font-family="Liberation Sans" font-weight="normal" font-size="12" fill="#000" text-anchor="start">#</text>
<rect x="495.1" y="226.9" width="64" height="17.8" fill="url(#sw1)"/>
<text transform="translate(569.53,240.5) scale(0.9939,1)" font-family="Liberation Sans" font-weight="normal" font-size="12" fill="#000" >05</text>
<text x="749.3" y="240.5" font-family="Liberation Sans" font-weight="normal" font-size="12" fill="#000" text-anchor="start">1</text>
<rect x="495.1" y="249.9" width="64" height="17.8" fill="url(#sw2)"/>
<text transform="translate(569.54,263.5) scale(0.9819,1)" font-family="Liberation Sans" font-weight="normal" font-size="12" fill="#000" >04</text>
<text x="749.3" y="263.5" font-family="Liberation Sans" font-weight="normal" font-size="12" fill="#000" text-anchor="start">1</text>
<rect x="495.1" y="272.9" width="64" height="17.8" fill="url(#sw3)"/>
<text transform="translate(569.59,286.5) scale(0.8798,1)" font-family="Liberation Sans" font-weight="normal" font-size="12" fill="#000" >03_07_08</text>
<text x="749.3" y="286.5" font-family="Liberation Sans" font-weight="normal" font-size="12" fill="#000" text-anchor="start">3</text>
<rect x="495.1" y="295.9" width="64" height="17.8" fill="url(#sw4)"/>
<text transform="translate(569.06,309.5) scale(1.0280,1)" font-family="Liberation Sans" font-weight="normal" font-size="12" fill="#000" >10</text>
<text x="749.3" y="309.5" font-family="Liberation Sans" font-weight="normal" font-size="12" fill="#000" text-anchor="start">1</text>
<rect x="488" y="317.0" width="290" height="22.8" fill="#efefef"/>
<rect x="495.1" y="318.9" width="64" height="17.8" fill="url(#sw5)"/>
<text transform="translate(569.59,332.5) scale(0.8788,1)" font-family="Liberation Sans" font-weight="normal" font-size="12" fill="#000" >01_02_06_09</text>
<text x="749.3" y="332.5" font-family="Liberation Sans" font-weight="normal" font-size="12" fill="#000" text-anchor="start">4</text>
<path transform="translate(499,388)" d="M-1.9,-6.6 H1.9 V-1.9 H6.6 V1.9 H1.9 V6.6 H-1.9 V1.9 H-6.6 V-1.9 H-1.9 Z" fill="#a6c6ea" stroke="#1f4f94" stroke-width="1.1"/>
<rect x="520.5" y="381" width="12" height="14.5" rx="1" fill="#fff" stroke="#888" stroke-width="1"/>
<path d="M523,386 h6 M523,388.5 h5 M523,391 h6" stroke="#bbb" stroke-width="0.8"/>
<path d="M525,393 L533,384 L535,386 L527,394.5 L524.5,395 Z" fill="#f0a020" stroke="#5a3a10" stroke-width="0.7"/>
<circle cx="534.2" cy="384.8" r="1.4" fill="#d02020"/>
<rect x="482.5" y="409.5" width="290" height="23" fill="#fff" stroke="#b8b8b8" stroke-width="1"/>
<text transform="translate(487.50,423.6) scale(0.9704,1)" font-family="Liberation Sans" font-weight="normal" font-size="12" fill="#000" >Unschärfe (%)</text>
<text x="767.4" y="423.6" font-family="Liberation Sans" font-weight="normal" font-size="12" fill="#000" text-anchor="end">0,0</text>
<rect x="773.5" y="410.5" width="10" height="10" fill="#f2f2f2" stroke="#c2c2c2" stroke-width="1"/>
<rect x="773.5" y="422.5" width="10" height="10" fill="#f2f2f2" stroke="#c2c2c2" stroke-width="1"/>
<path d="M775,417 H782 L778.5,413 Z" fill="#4a5cc0"/>
<path d="M775,425.5 H782 L778.5,429.5 Z" fill="#a8a8a8"/>
<rect x="482.5" y="437.5" width="290" height="23" fill="#fff" stroke="#d8d8d8" stroke-width="1"/>
<rect x="484.5" y="439.5" width="285" height="18.5" fill="#b7c1cb"/>
<path d="M484.5,458.3 H769.6 V439" fill="none" stroke="#1a1010" stroke-width="1.2"/>
<text transform="translate(487.43,451.4) scale(0.9810,1)" font-family="Liberation Sans" font-weight="normal" font-size="12" fill="#000" >Deckkraft (%)</text>
<text x="767.4" y="451.4" font-family="Liberation Sans" font-weight="normal" font-size="12" fill="#000" text-anchor="end">100,0</text>
<rect x="773.5" y="438.5" width="10" height="10" fill="#f2f2f2" stroke="#c2c2c2" stroke-width="1"/>
<rect x="773.5" y="450.5" width="10" height="10" fill="#f2f2f2" stroke="#c2c2c2" stroke-width="1"/>
<path d="M775,445 H782 L778.5,441 Z" fill="#a8a8a8"/>
<path d="M775,453.5 H782 L778.5,457.5 Z" fill="#4a5cc0"/>
</svg>
</body></html>
